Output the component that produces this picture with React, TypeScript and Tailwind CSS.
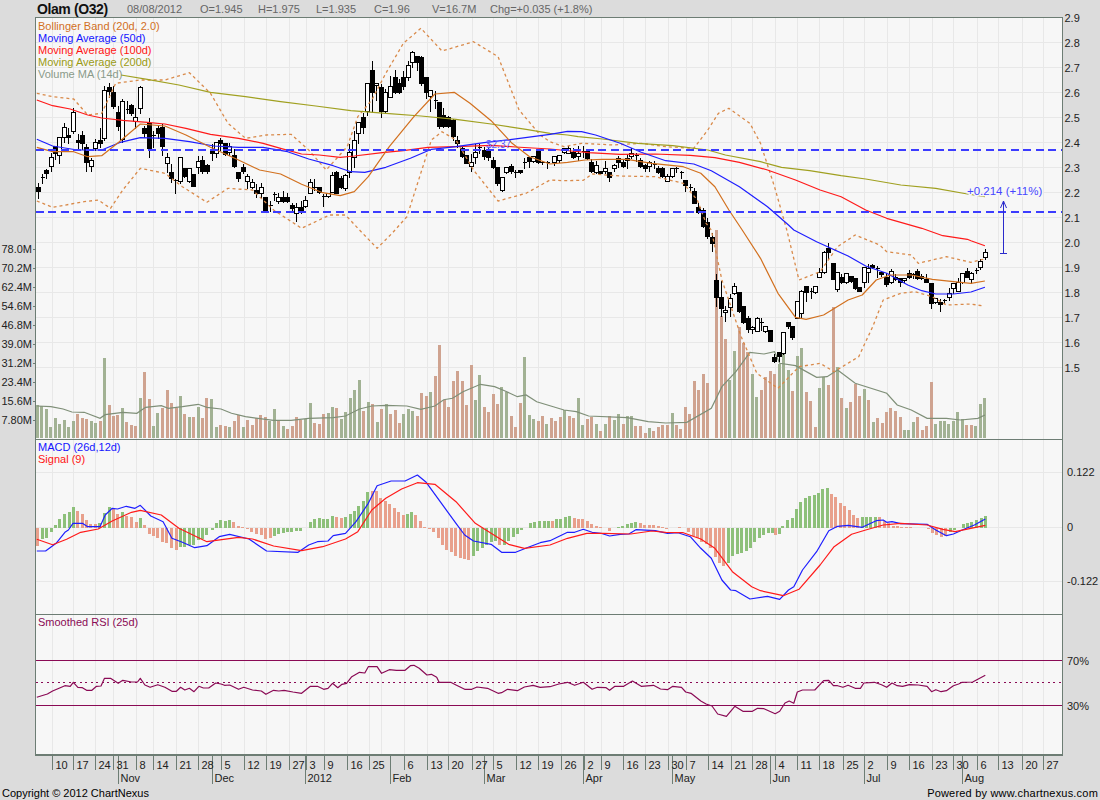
import React from "react";

const SX = 2.851;
type P = number[];
const pts = (a: P, ox: number, oy: number) => {
  const r: string[] = [];
  for (let i = 0; i < a.length; i += 2) r.push(`${(ox + a[i] / SX).toFixed(1)},${(oy + a[i + 1] / 3).toFixed(1)}`);
  return r;
};
const line = (...segs: [P, number, number][]) => segs.flatMap(([a, ox, oy]) => pts(a, ox, oy)).join(" ");

const ma200 = line(
  [[345,225,420,238,510,255,600,277,700,290,800,305,900,318,1000,332,1100,340,1200,348,1300,358,1400,372,1500,388,1568,400], 0, 0],
  [[50,405,80,410,150,417,250,430,350,437,450,450,500,465,600,485,660,502,740,512,830,527,900,537,1000,555,1100,565,1190,582,1240,590], 550, 0]
);
const ma100 = line(
  [[105,300,150,317,200,327,250,345,290,354,350,361,420,367,470,372,530,385,600,403,680,415,750,430,800,445,860,462,910,465,970,472,1010,468,1090,458,1150,452,1220,442,1300,440,1400,436,1470,441,1568,447], 0, 0],
  [[60,453,110,458,200,463,300,462,400,466,470,473,540,487,620,510,700,540,770,570,830,590,900,630,960,655,1060,685,1120,707,1190,718], 550, 0],
  [[1200,32,1240,47], 550, 230]
);
const ma50 = line(
  [[105,418,150,438,220,450,290,450,340,428,400,413,470,415,540,425,610,438,680,442,750,442,820,455,880,477,950,497,1000,515,1040,517,1100,502,1170,475,1230,448,1300,440,1380,428,1460,418,1568,403], 0, 0],
  [[50,394,90,395,130,405,200,430,260,457,330,482,410,492,460,512,540,560,620,620,680,675], 550, 0],
  [[695,0,760,35,850,78,900,108,960,130,1020,165,1060,182,1100,192,1150,192,1200,186,1240,172], 550, 230]
);
const bbMid = line(
  [[105,442,150,455,210,455,250,470,290,467,340,425,400,372,470,378,530,405,600,442,680,480,740,510,800,522,860,553,920,578,970,587,1010,575,1050,530,1110,440,1180,350,1240,282,1295,277,1340,310,1400,362,1460,430,1510,470,1568,492], 0, 0],
  [[50,487,100,480,150,478,220,478,290,490,380,500,430,520,470,560,510,630], 550, 0],
  [[548,0,600,85,650,190,700,262,730,268,780,255,850,210,890,195,930,150,970,135,1030,135,1090,148,1150,155,1200,160,1240,153], 550, 230]
);
const bbUp = line(
  [[105,280,150,290,210,297,250,345,290,340,330,250,400,240,470,240,540,218,600,280,650,370,700,415,760,405,830,403,880,450,930,510,990,440,1020,350,1060,300,1100,220,1150,130,1200,85,1260,153,1350,125,1420,170,1480,330,1540,405,1568,425], 0, 0],
  [[40,440,90,430,180,435,260,430,330,440,410,445,450,390,480,340,510,325,570,370,600,430,640,560], 550, 0],
  [[675,0,710,150,770,125,820,50,870,15,940,45,960,65,1030,75,1050,100,1130,80,1200,97,1235,88], 550, 230]
);
const bbLow = line(
  [[105,603,150,622,240,605,280,600,315,625,350,570,400,505,470,520,520,560,590,607,650,565,720,570,780,630,860,685,940,645,985,645], 0, 0],
  [[1025,0,1075,55,1118,10], 0, 230],
  [[1160,650,1230,420,1260,395,1300,420,1350,510,1420,603,1500,580,1568,540], 0, 0],
  [[40,542,95,541,120,522,200,528,300,530,340,540,380,550,420,600,445,670], 550, 0],
  [[460,0,490,150,545,320,590,430,650,475,710,410,770,400,810,425,880,380,920,290,950,210,1000,190,1040,185,1090,200,1130,225,1200,222,1235,228], 550, 230]
);
const volMa = line(
  [[105,528,145,530,180,537,205,546,240,547,285,565,300,554,350,547,390,550,415,532,460,527,480,535,520,530,565,523,590,532,630,537,660,550,700,560,780,571,830,571,880,565,950,563,985,558,1025,537,1060,528,1100,526,1160,528,1200,538,1240,528,1265,509,1290,505,1320,485,1370,463,1410,470,1440,483,1475,500,1500,495,1530,515,1568,527], 0, 230],
  [[40,540,75,545,110,558,220,563,280,575,330,579,390,577,460,535,490,470,530,425,570,367,610,372,640,365,655,400,700,407,760,442,790,440,820,420,870,460,960,490,990,525,1030,540,1075,565,1130,565,1170,570,1220,565,1240,555], 550, 230]
);
const macdB = line(
  [[105,348,130,348,160,325,185,292,195,285,208,265,235,265,250,275,285,275,300,240,320,220,335,222,360,214,385,220,400,211,430,243,465,260,490,310,520,322,555,338,590,332,625,305,655,298,710,312,760,348,850,352,880,330,905,320,935,318,950,302,985,295,1015,260,1050,205,1075,152,1115,138,1155,138,1190,120,1215,142,1255,200,1300,265,1325,300,1350,318,1400,328,1430,352,1470,352,1510,335,1540,323,1568,317], 0, 435],
  [[50,292,70,292,95,283,120,292,145,295,170,303,200,298,225,297,245,284,300,287,335,295,365,293,400,305,430,340,460,370,490,435,515,465,530,467,570,492,620,484,655,493,680,465,695,455,720,405,760,350,795,287,820,274,850,271,890,277,930,257,950,255,960,262,975,260,1000,266,1075,268,1100,285,1130,302,1150,297,1180,283,1210,270,1241,252], 550, 435]
);
const macdR = line(
  [[105,313,150,329,190,313,230,292,280,282,320,258,375,232,400,226,460,240,510,280,590,320,680,307,720,312,780,333,860,347,920,335,985,312,1020,290,1060,225,1100,190,1145,162,1190,143,1240,148,1300,200,1355,265,1400,295,1450,328,1495,340,1568,330], 0, 435],
  [[50,310,105,295,150,295,230,297,290,288,330,292,380,293,430,312,470,340,520,410,575,455,600,467,665,482,710,463,770,390,810,335,860,298,900,285,950,270,1000,265,1075,270,1120,283,1155,290,1241,271], 550, 435]
);
const rsi = line(
  [[105,262,135,252,150,243,185,227,200,229,209,217,222,232,235,233,247,241,262,241,275,229,288,228,298,205,315,205,337,220,350,211,375,216,392,216,400,205,413,225,428,232,450,224,470,232,490,244,503,244,515,232,527,240,540,235,553,245,567,229,580,234,595,234,615,219,630,222,640,226,655,225,680,238,695,232,720,240,745,243,758,253,780,241,795,243,810,241,835,246,860,250,885,229,905,229,923,238,935,235,948,220,963,233,975,223,988,220,1003,200,1025,187,1040,189,1050,170,1075,170,1088,190,1110,179,1130,181,1155,181,1170,167,1180,166,1195,175,1217,195,1230,193,1245,202,1252,217,1285,217,1300,225,1325,238,1345,238,1360,231,1390,235,1420,250,1430,248,1447,238,1475,242,1495,231,1520,226,1540,232,1568,230], 0, 610],
  [[25,222,50,217,70,226,95,217,120,238,135,232,160,233,170,241,185,229,210,229,235,213,260,229,295,226,315,237,335,239,350,229,375,232,387,246,402,250,430,273,445,282,462,288,478,312,503,319,527,289,550,304,577,304,592,295,610,296,642,311,655,304,670,279,682,273,695,280,705,246,720,240,755,240,780,212,795,211,808,227,820,227,835,232,850,226,870,235,885,235,895,219,925,217,945,224,960,232,975,219,990,227,1005,229,1025,224,1050,225,1075,229,1088,245,1100,239,1115,245,1130,242,1150,227,1165,222,1175,217,1205,216,1241,196], 550, 610]
);

const parseBars = (s: string, ox: number) =>
  s.split(" ").map((t) => {
    const m = t.match(/^(\d+)([gr])(\d+)$/)!;
    return { x: ox + Number(m[1]) / SX, c: m[2], v: Number(m[3]) };
  });

const volBars = [
  ...parseBars("107g525 119g528 132g537 144g591 157g565 170g582 183g570 196g591 209g573 221r552 234r565 247r568 260g573 273g579 286r573 298g384 311r525 323r558 336r555 349g534 361r576 374r585 387r588 400g504 412r426 425r507 437g588 450g549 463r534 477r480 489r519 502r534 514g498 527r552 540g561 552r561 565g531 578r564 590r504 603g507 616g591 629r585 642r588 655g591 668r573 680r555 693g591 705r570 719r585 731r564 743r555 756r562 769g573 782g537 795r573 808g588 820r597 833r588 846r561 858r570 871g567 884g519 897r579 910r582 922r552 936g549 948g531 960r534 973g567 985g546 999g504 1011g480 1024g450 1036r543 1050g516 1062r522 1075g576 1088r537 1101g522 1113r552 1127r540 1139r579 1151g552 1164g537 1176g543 1190r558 1202r489 1215r498 1227g486 1241r438 1253r345 1267r510 1279r531 1292r453 1305r423 1318r453 1330r525 1343r405 1355g510 1368g435 1381r531 1392r546 1406r492 1419r522 1431g471 1444g486 1457r558 1470r591 1483r519 1495g381 1509g555 1521g567 1534r573 1547r558 1559g582", 0),
  ...parseBars("4r564 17r573 30r561 42g540 55r558 68r564 81g504 93g585 106r567 119r561 132g582 144r603 157g582 170r558 183g570 196g552 209r582 220g558 232g558 245r588 258r588 271r609 283g594 296r603 309r591 322r585 335r585 348g549 360r585 373r597 386r531 399r552 411r453 424r480 437r432 450r459 475r0 488r258 500r327 513g450 526g363 539r291 552r339 564r366 577g432 590g501 603r480 615r442 628r423 641r432 654g402 666g372 679g420 692r483 705g378 718g354 730r486 743r513 756r590 769g474 781g441 794r465 807r232 819g411 832r504 845g534 858r516 870r462 883r498 896g477 908r510 921g576 934r564 947r579 959r546 972r534 985r543 998r561 1010g600 1023g600 1036g576 1048r561 1061r600 1074r588 1087r456 1099g582 1112g573 1125g573 1137g582 1150g573 1163g546 1176g567 1188r585 1201r585 1214g588 1227g522 1240g504", 550),
];
const macdBars = [
  ...parseBars("107r332 120g312 132g308 146g290 158g270 170g252 185g236 197g231 210g216 220r228 235r237 247r255 258r266 272r266 285g263 298g233 311g216 323r222 336r236 349g231 362r242 374r245 388r260 400g250 412r270 425r298 437r304 450r310 463r322 476r325 489r340 502r345 514g335 527g335 540g330 552g330 565g315 577g313 590g300 605g285 617g265 630g255 642g258 655g255 667r262 680r273 692r277 705r283 718r290 730r296 745r300 757r313 770r310 782g303 795g298 807g293 820g292 832g290 845g288 858g288 870g280 885g262 897g252 910g250 922g252 935g252 948g243 960r245 973r250 985g245 998g238 1010g228 1023g212 1036g197 1048g170 1061r168 1073r168 1086r190 1098r198 1111r208 1124r218 1136r230 1149r240 1161g238 1174g232 1186r240 1199r258 1211r277 1224r282 1237r290 1249r308 1262r330 1274r345 1287r350 1299r362 1312r368 1324r372 1337r374 1350g362 1362g348 1375g338 1387g330 1400g322 1412g318 1424r330 1437g330 1450g318 1463g305 1476g298 1488g285 1500g278 1513g265 1525g260 1538g258 1551g258 1563g258", 0),
  ...parseBars("6r258 19g252 31g252 44g245 57g243 69r250 82r252 94r252 107r258 119r268 132r272 144r277 157r280 169r287 182g280 194g277 207g273 220g268 232g263 245g262 258r265 270r270 283r270 295r270 308r274 320r277 333r281 345g280 358g278 370r277 383r280 396r290 408r302 421r310 433r322 446r328 458r340 471r365 483r385 496r392 509g383 521g362 534g357 546g353 559g347 572g340 584g322 597g310 609g300 622g295 634g293 642r300 655g298 664g272 677g255 690g250 702g222 715g202 728g188 740g183 753g180 765g175 778g162 790g158 803r177 815r187 828r205 840r213 853r225 866r240 878r250 890g245 903g245 915g245 928g245 940r247 953r258 966r265 978r272 991r272 1003r275 1016r276 1028r276 1041g278 1053r278 1066r280 1078r282 1091r295 1103r300 1116r305 1128r303 1141g290 1153g285 1166g278 1178g268 1191g264 1203g260 1216g255 1229g250 1241g243", 550),
];

type C = [number, number, number, number, number, string];
const cL: C[] = [
  [107,547,560,572,595,"b"],[119,520,531,533,548,"+"],[132,505,510,518,535,"b"],[144,455,472,497,512,"w"],[157,435,437,458,478,"b"],[169,410,412,465,488,"w"],[183,367,382,412,425,"w"],[195,380,405,412,430,"b"],[208,322,337,392,400,"w"],[221,400,420,425,447,"b"],[234,390,405,428,447,"b"],[246,430,442,487,512,"b"],[259,470,480,497,512,"w"],[272,415,427,443,450,"w"],[285,380,420,428,440,"b"],[297,255,270,413,420,"w"],[311,245,262,272,290,"b"],[323,255,275,318,325,"b"],[335,315,337,377,390,"b"],[347,295,302,418,425,"w"],[361,300,327,330,340,"+"],[373,310,315,338,345,"b"],[386,320,352,362,385,"w"],[399,255,260,323,340,"w"],[411,375,383,398,410,"b"],[424,350,368,443,472,"b"],[437,390,405,407,440,"+"],[450,372,383,398,415,"b"],[462,370,382,437,465,"b"],[476,455,472,488,515,"w"],[488,490,517,533,545,"b"],[500,535,540,542,578,"+"],[513,472,472,542,548,"w"],[525,500,503,527,530,"b"],[538,500,503,542,545,"w"],[551,518,522,557,558,"b"],[564,465,482,502,520,"w"],[577,465,481,513,520,"b"],[590,490,495,513,518,"b"],[603,430,450,458,480,"b"],[615,427,427,458,472,"w"],[628,410,420,428,450,"b"],[641,425,428,462,465,"b"],[653,425,437,455,465,"w"],[667,445,465,497,500,"b"],[679,515,517,533,542,"b"],[692,490,500,512,520,"b"],[705,518,527,542,565,"w"],[718,535,546,562,565,"w"],[731,548,570,578,590,"b"],[744,545,562,578,590,"w"],[756,590,592,632,632,"b"],[769,600,615,617,632,"+"],[782,572,583,586,600,"+"],[794,575,592,604,608,"w"],[807,570,592,602,606,"b"],[819,575,592,603,605,"b"],[832,605,616,623,635,"b"],[845,605,622,638,662,"w"],[858,600,620,635,640,"b"],[870,585,601,617,620,"w"],[883,535,547,578,580,"w"],[896,533,562,564,570,"+"],[909,557,560,575,580,"b"],[921,578,587,589,617,"+"],[934,575,578,587,590,"w"],[947,512,525,575,577,"w"],[958,510,517,578,580,"b"],[971,525,533,560,565,"b"],[983,520,525,563,570,"w"],[996,430,457,515,532,"w"],[1009,390,421,470,500,"w"],[1022,365,367,398,430,"w"],[1034,335,350,380,400,"b"],[1047,248,248,332,345,"w"],[1060,180,211,275,335,"b"],[1073,245,248,256,300,"w"],[1086,250,260,332,352,"b"],[1099,265,277,332,335,"w"],[1112,225,257,290,290,"w"],[1125,208,232,275,280,"b"],[1137,235,250,275,280,"b"],[1149,210,232,258,268,"b"],[1162,180,196,232,240,"w"],[1175,150,157,187,200,"w"],[1188,165,167,187,210,"b"],[1200,165,170,248,255,"b"],[1214,230,232,277,295,"b"],[1227,270,271,288,332,"w"],[1240,270,300,302,325,"+"],[1251,305,307,378,385,"b"],[1264,322,344,378,380,"b"],[1277,345,350,378,380,"b"],[1291,355,361,408,420,"b"],[1304,405,420,430,440,"b"],[1317,438,445,467,470,"b"],[1329,462,465,488,490,"b"],[1342,460,487,497,513,"w"],[1354,430,457,472,488,"w"],[1367,430,440,443,460,"+"],[1380,437,450,467,478,"b"],[1392,437,450,472,480,"b"],[1405,468,480,502,505,"b"],[1417,498,502,548,555,"b"],[1430,530,532,571,572,"w"],[1443,500,502,517,520,"w"],[1456,490,497,513,520,"b"],[1469,507,515,517,530,"+"],[1482,508,510,517,518,"b"],[1495,470,487,489,505,"+"],[1507,470,472,482,500,"b"],[1520,465,467,482,485,"w"],[1533,450,452,487,490,"b"],[1546,480,486,488,492,"+"],[1559,480,487,490,503,"+"],
];
const cR: C[] = [
  [12,465,467,487,495,"w"],[27,462,466,480,485,"w"],[40,440,443,457,460,"w"],[52,435,443,458,460,"w"],[65,440,457,472,475,"b"],[80,435,458,468,480,"w"],[93,435,452,455,470,"+"],[105,445,453,473,478,"b"],[118,475,487,512,515,"b"],[130,480,496,517,520,"w"],[143,510,512,517,520,"b"],[156,480,503,513,520,"w"],[168,515,517,532,542,"b"],[182,490,496,503,512,"w"],[194,465,473,487,500,"b"],[207,475,485,497,500,"b"],[220,460,473,480,503,"b"],[232,442,458,467,475,"w"],[245,455,466,468,482,"+"],[257,470,480,497,500,"b"],[270,490,496,503,512,"b"],[282,480,487,497,512,"w"],[296,480,491,493,503,"+"],[308,495,503,515,518,"b"],[320,497,503,527,530,"b"],[333,520,527,542,542,"w"],[347,500,503,527,532,"w"],[360,497,503,505,517,"+"],[373,510,517,519,535,"+"],[385,538,540,556,572,"b"],[398,548,562,564,570,"+"],[410,560,572,608,608,"b"],[422,605,622,635,640,"b"],[435,620,630,677,680,"b"],[447,650,667,707,715,"b"],
];
const cR2: C[] = [
  [462,5,22,38,63,"b"],[472,130,150,200,228,"b"],[487,150,202,233,257,"b"],[499,225,240,247,272,"w"],[512,190,205,230,258,"w"],[524,155,167,190,192,"w"],[538,185,187,244,245,"b"],[550,225,228,275,278,"b"],[564,255,263,297,305,"b"],[576,285,290,297,310,"w"],[589,258,265,302,303,"w"],[602,260,277,280,300,"+"],[614,285,289,303,305,"w"],[627,298,301,332,333,"b"],[639,368,382,393,396,"b"],[652,365,367,377,392,"b"],[664,305,307,370,372,"w"],[678,272,275,288,295,"b"],[690,285,289,322,327,"b"],[703,210,212,263,265,"w"],[716,178,184,250,262,"w"],[730,165,168,187,212,"b"],[743,170,182,187,205,"+"],[755,165,168,185,188,"w"],[767,112,127,140,140,"w"],[781,60,65,127,128,"w"],[793,35,55,67,85,"b"],[806,98,100,146,148,"b"],[819,123,125,177,183,"w"],[831,130,140,157,158,"b"],[844,127,130,157,158,"w"],[857,135,137,154,156,"b"],[869,143,145,175,177,"b"],[881,168,170,182,183,"b"],[894,110,112,157,170,"w"],[906,100,115,127,155,"w"],[919,100,106,110,115,"b"],[932,105,113,117,140,"+"],[945,120,125,132,137,"b"],[958,125,140,162,167,"b"],[971,115,123,157,158,"w"],[984,130,140,145,150,"b"],[997,140,143,155,167,"b"],[1010,140,143,150,155,"w"],[1023,118,130,140,143,"b"],[1034,125,133,136,143,"+"],[1046,115,122,145,147,"b"],[1059,130,137,143,147,"b"],[1072,130,148,155,155,"b"],[1086,158,160,220,233,"b"],[1099,200,203,217,218,"w"],[1112,205,215,218,243,"b"],[1124,203,210,213,220,"+"],[1137,172,188,202,210,"w"],[1149,158,160,175,190,"w"],[1162,140,155,182,183,"w"],[1175,128,130,157,158,"w"],[1188,112,123,140,142,"b"],[1201,122,130,147,160,"w"],[1214,112,119,121,130,"+"],[1226,85,94,112,117,"w"],[1239,55,67,80,87,"w"],
];
const candles = [
  ...cL.map((c) => ({ c, ox: 0, oy: 0 })),
  ...cR.map((c) => ({ c, ox: 550, oy: 0 })),
  ...cR2.map((c) => ({ c, ox: 550, oy: 230 })),
];

const ticksL: [number, string][] = [[147,"10"],[209,"17"],[272,"24"],[323,"31"],[389,"8"],[437,"14"],[503,"21"],[565,"28"],[629,"5"],[695,"12"],[757,"19"],[823,"27"],[871,"3"],[923,"9"],[988,"16"],[1051,"25"],[1153,"6"],[1216,"13"],[1278,"20"],[1345,"27"],[1406,"5"],[1470,"12"],[1535,"19"]];
const ticksR: [number, string][] = [[30,"26"],[96,"2"],[144,"9"],[209,"16"],[272,"23"],[336,"30"],[387,"7"],[451,"14"],[515,"21"],[577,"28"],[642,"4"],[705,"11"],[768,"18"],[834,"25"],[896,"2"],[960,"9"],[1024,"16"],[1088,"23"],[1150,"30"],[1216,"6"],[1278,"13"],[1345,"20"],[1406,"27"]];
const ticks = [
  ...ticksL.map(([x, t]) => ({ x: Math.round(x / SX) + 0.5, t })),
  ...ticksR.map(([x, t]) => ({ x: Math.round(550 + x / SX) + 0.5, t })),
];
const months: [number, string][] = [[118.5,"Nov"],[212.5,"Dec"],[305.5,"2012"],[390.5,"Feb"],[484.5,"Mar"],[583.5,"Apr"],[672.5,"May"],[770.5,"Jun"],[864.5,"Jul"],[962.5,"Aug"]];
const prices = ["2.9","2.8","2.7","2.6","2.5","2.4","2.3","2.2","2.1","2.0","1.9","1.8","1.7","1.6","1.5"];
const vols = ["78.0M","70.2M","62.4M","54.6M","46.8M","39.0M","31.2M","23.4M","15.6M","7.80M"];
const legend: [string, string][] = [["Bollinger Band (20d, 2.0)","#d2701e"],["Moving Average (50d)","#1414ff"],["Moving Average (100d)","#ff1414"],["Moving Average (200d)","#9a9a14"],["Volume MA (14d)","#8a9a8a"]];
const stats: [string, string][] = [["08/08/2012","w-[73px]"],["O=1.945","w-[58px]"],["H=1.975","w-[58px]"],["L=1.935","w-[58px]"],["C=1.96","w-[58px]"],["V=16.7M","w-[58px]"],["Chg=+0.035 (+1.8%)","w-[120px]"]];

const AX = "#6d7d74";
const L = 35.5, R = 1062.5;

export default function App() {
  return (
    <div className="w-[1100px] h-[800px] overflow-hidden flex flex-col bg-[#dcdcdc] font-['Liberation_Sans',Arial,sans-serif]">
      <div className="h-[18px] flex items-center pl-[37px] whitespace-nowrap">
        <div className="w-[90px] text-[14px] leading-none font-bold text-[#111] tracking-[-0.4px]">Olam (O32)</div>
        {stats.map(([t, w]) => (
          <div key={t} className={`${w} text-[11px] leading-none text-[#666]`}>{t}</div>
        ))}
      </div>
      <svg viewBox="0 18 1100 768" className="block w-[1100px] h-[768px] text-[11px] overflow-visible">
        <rect x={L} y={17.5} width={R - L} height={737.5} fill="#f7f7f7" />
        <g stroke="#e8e8e8" strokeWidth="1.2" shapeRendering="crispEdges">
          {ticks.map((t) => <line key={t.x} x1={t.x} x2={t.x} y1={18} y2={755} />)}
          <line x1={381.5} x2={381.5} y1={18} y2={755} />
          {prices.slice(1).map((_, i) => <line key={i} x1={L} x2={R} y1={42.5 + 25 * i} y2={42.5 + 25 * i} />)}
          {[472.5, 527.5, 581.5].map((y) => <line key={y} x1={L} x2={R} y1={y} y2={y} />)}
        </g>

        <g shapeRendering="crispEdges">
          {volBars.map((b, i) => (
            <rect key={i} x={b.x - 1.5} y={230 + b.v / 3} width={3} height={438 - (230 + b.v / 3)} fill={b.c === "g" ? "#a2b294" : "#cfa390"} />
          ))}
        </g>
        <polyline points={volMa} fill="none" stroke="#7f8f78" strokeWidth="1.2" />

        <g stroke="#000" shapeRendering="crispEdges">
          {candles.map(({ c: [X, H, T, B, Lo, k], ox, oy }, i) => {
            const x = Math.round(ox + X / SX) + 0.5;
            const yy = (v: number) => Math.round(oy + v / 3) + 0.5;
            return (
              <g key={i}>
                <line x1={x} x2={x} y1={yy(H)} y2={yy(Lo)} />
                {k === "+" ? (
                  <line x1={x - 2} x2={x + 2} y1={yy(T)} y2={yy(T)} />
                ) : (
                  <rect x={x - 2} y={yy(T)} width={4} height={Math.max(2, yy(B) - yy(T))} fill={k === "b" ? "#000" : "#fff"} />
                )}
              </g>
            );
          })}
        </g>

        <g fill="none" strokeLinejoin="round">
          <polyline points={bbUp} stroke="#d98a4a" strokeWidth="1.3" strokeDasharray="3 3" />
          <polyline points={bbLow} stroke="#d98a4a" strokeWidth="1.3" strokeDasharray="3 3" />
          <polyline points={ma200} stroke="#a0a020" strokeWidth="1.2" />
          <polyline points={ma100} stroke="#ff1a1a" strokeWidth="1.2" />
          <polyline points={ma50} stroke="#1e1eff" strokeWidth="1.2" />
          <polyline points={bbMid} stroke="#d2701e" strokeWidth="1.2" />
        </g>

        <g stroke="#3c3cff" strokeWidth="2" strokeDasharray="8 4.5" shapeRendering="crispEdges">
          <line x1={L} x2={R} y1={150} y2={150} />
          <line x1={L} x2={R} y1={212} y2={212} />
        </g>
        <text x={486} y={148} className="text-[10px]" fill="#5a5aff">$2.37</text>

        <g stroke="#2a2acc" fill="none">
          <line x1={1003.5} x2={1003.5} y1={201} y2={253.5} shapeRendering="crispEdges" />
          <line x1={1000} x2={1007} y1={253.5} y2={253.5} shapeRendering="crispEdges" />
          <polyline points="1000.5,208 1003.5,201 1006.5,208" />
        </g>
        <text x={967} y={195} fill="#4646ff" stroke="#f7f7f7" strokeWidth="2.5" paintOrder="stroke" className="text-[11.5px]">+0.214 (+11%)</text>

        {legend.map(([t, c], i) => (
          <text key={t} x={38} y={29.5 + 12 * i} fill={c}>{t}</text>
        ))}

        <g shapeRendering="crispEdges">
          {macdBars.map((b, i) => {
            const y0 = 435 + b.v / 3;
            const top = Math.min(y0, 527.5);
            return <rect key={i} x={b.x - 1.5} y={top} width={3} height={Math.abs(y0 - 527.5)} fill={b.c === "g" ? "#8dc07a" : "#e8a08c"} />;
          })}
        </g>
        <g fill="none" strokeLinejoin="round">
          <polyline points={macdB} stroke="#1e1eff" strokeWidth="1.2" />
          <polyline points={macdR} stroke="#ff1a1a" strokeWidth="1.2" />
        </g>
        <text x={38} y={451} fill="#1414ff">MACD (26d,12d)</text>
        <text x={38} y={463} fill="#ff1414">Signal (9)</text>

        <g stroke="#8a0a55" shapeRendering="crispEdges">
          <line x1={L} x2={R} y1={660.5} y2={660.5} strokeWidth="1.2" />
          <line x1={L} x2={R} y1={705.5} y2={705.5} strokeWidth="1.2" />
          <line x1={L} x2={R} y1={682.5} y2={682.5} strokeDasharray="2 3.5" strokeWidth="1.2" />
        </g>
        <polyline points={rsi} fill="none" stroke="#8a0a55" strokeWidth="1.2" strokeLinejoin="round" />
        <text x={38} y={626} fill="#8a0a55">Smoothed RSI (25d)</text>

        <g stroke={AX} fill="none" shapeRendering="crispEdges">
          <rect x={L} y={17.5} width={R - L} height={737.5} strokeWidth="1.3" />
          <line x1={L} x2={R} y1={439.5} y2={439.5} strokeWidth="1.4" />
          <line x1={L} x2={R} y1={614.5} y2={614.5} strokeWidth="1.4" />
          {ticks.map((t) => <line key={t.x} x1={t.x} x2={t.x} y1={755} y2={770} />)}
          {months.map(([x, t]) => <line key={t} x1={x} x2={x} y1={755} y2={784} />)}
          {vols.map((_, i) => <line key={i} x1={33} x2={L} y1={249.5 + 19 * i} y2={249.5 + 19 * i} />)}
        </g>

        <g fill="#222">
          {prices.map((p, i) => <text key={p} x={1064.5} y={21.5 + 25 * i}>{p}</text>)}
          {vols.map((v, i) => <text key={v} x={32} y={253 + 19 * i} textAnchor="end">{v}</text>)}
          <text x={1067} y={476}>0.122</text>
          <text x={1067} y={531}>0</text>
          <text x={1067} y={585}>-0.122</text>
          <text x={1067} y={664.5}>70%</text>
          <text x={1067} y={709.5}>30%</text>
          {ticks.map((t) => <text key={t.x} x={t.x + 3} y={768.5}>{t.t}</text>)}
          {months.map(([x, t]) => <text key={t} x={x + 2} y={781.5}>{t}</text>)}
        </g>
      </svg>
      <div className="h-[14px] flex justify-between items-center pl-[2px] pr-[2px] text-[11px] leading-none text-black whitespace-nowrap">
        <span>Copyright © 2012 ChartNexus</span>
        <span className="tracking-[0.2px]">Powered by www.chartnexus.com</span>
      </div>
    </div>
  );
}
